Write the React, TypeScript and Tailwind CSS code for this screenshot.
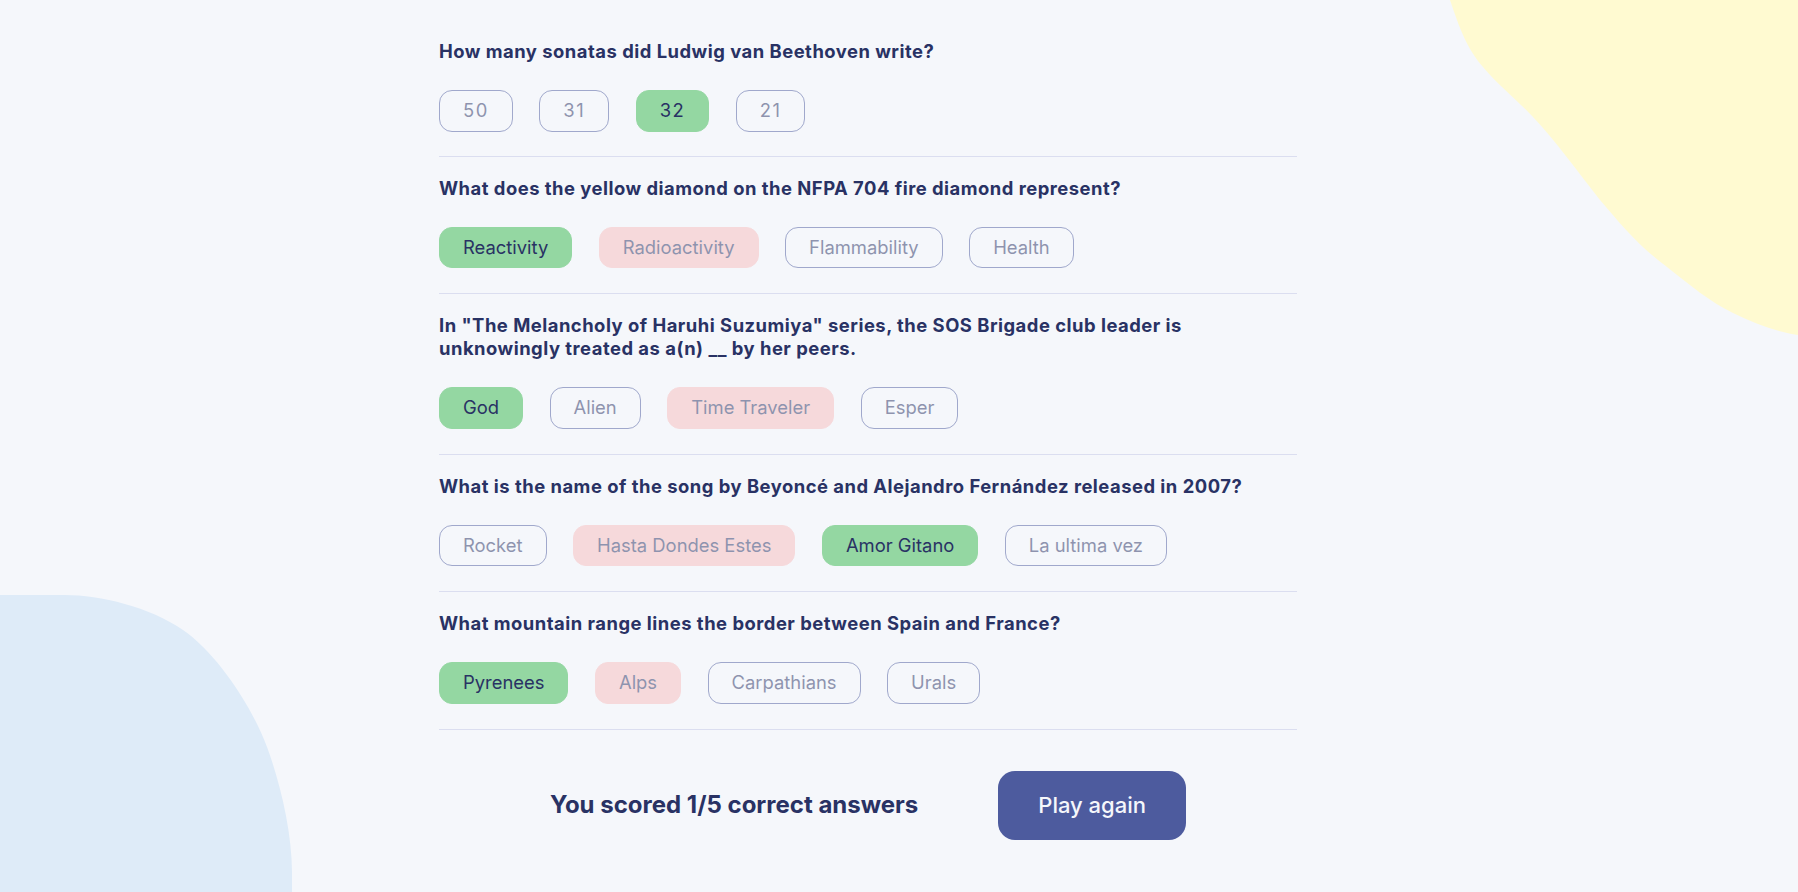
import React from 'react'

type Status = 'correct' | 'wrong' | 'idle'

interface Option {
  text: string
  status: Status
}

interface Question {
  question: string
  options: Option[]
}

const questions: Question[] = [
  {
    question: 'How many sonatas did Ludwig van Beethoven write?',
    options: [
      { text: '50', status: 'idle' },
      { text: '31', status: 'idle' },
      { text: '32', status: 'correct' },
      { text: '21', status: 'idle' },
    ],
  },
  {
    question: 'What does the yellow diamond on the NFPA 704 fire diamond represent?',
    options: [
      { text: 'Reactivity', status: 'correct' },
      { text: 'Radioactivity', status: 'wrong' },
      { text: 'Flammability', status: 'idle' },
      { text: 'Health', status: 'idle' },
    ],
  },
  {
    question:
      'In "The Melancholy of Haruhi Suzumiya" series, the SOS Brigade club leader is unknowingly treated as a(n) __ by her peers.',
    options: [
      { text: 'God', status: 'correct' },
      { text: 'Alien', status: 'idle' },
      { text: 'Time Traveler', status: 'wrong' },
      { text: 'Esper', status: 'idle' },
    ],
  },
  {
    question: 'What is the name of the song by Beyoncé and Alejandro Fernández released in 2007?',
    options: [
      { text: 'Rocket', status: 'idle' },
      { text: 'Hasta Dondes Estes', status: 'wrong' },
      { text: 'Amor Gitano', status: 'correct' },
      { text: 'La ultima vez', status: 'idle' },
    ],
  },
  {
    question: 'What mountain range lines the border between Spain and France?',
    options: [
      { text: 'Pyrenees', status: 'correct' },
      { text: 'Alps', status: 'wrong' },
      { text: 'Carpathians', status: 'idle' },
      { text: 'Urals', status: 'idle' },
    ],
  },
]

function OptionButton({ option }: { option: Option }) {
  const styles = {
    correct: 'border-[#94D7A2] bg-[#94D7A2]',
    wrong: 'border-[#F8BCBC] bg-[#F8BCBC] opacity-50',
    idle: 'border-[#4D5B9E] bg-transparent opacity-50',
  }[option.status]
  // digits render a touch wider in the original font
  const numeric = /^\d+$/.test(option.text) ? 'tracking-[1.5px]' : ''

  return (
    <button
      className={`rounded-[13px] border px-[23px] py-[9px] text-[18.4px] leading-[21.5px] text-[#293264] ${numeric} ${styles}`}
    >
      {option.text}
    </button>
  )
}

function QuestionBlock({ item, first }: { item: Question; first: boolean }) {
  return (
    <div
      className={`border-b border-[#DBDEF0] ${first ? 'pt-[40px] pb-[24px]' : 'pt-[20px] pb-[25px]'}`}
    >
      <h2 className="max-w-[820px] text-[18.4px] font-bold leading-[23px] tracking-[0.5px] text-[#293264]">
        {item.question}
      </h2>
      <div className="mt-[27px] flex gap-[26.5px]">
        {item.options.map((o) => (
          <OptionButton key={o.text} option={o} />
        ))}
      </div>
    </div>
  )
}

export default function App() {
  return (
    <div className="relative min-h-screen overflow-hidden bg-[#F5F7FB] [font-family:Inter,sans-serif]">
      {/* yellow blob top right */}
      <svg
        className="absolute right-0 top-0"
        width="358"
        height="340"
        viewBox="0 0 358 340"
        aria-hidden="true"
      >
        <path
          d="M10 0 C 20 30, 28 50, 43 67 C 60 87, 75 98, 93 117 C 115 140, 138 172, 160 200 C 182 226, 200 247, 227 267 C 250 285, 270 302, 293 313 C 315 324, 338 332, 358 335 L 358 0 Z"
          fill="#FFFAD1"
        />
      </svg>

      {/* blue blob bottom left */}
      <svg
        className="absolute bottom-0 left-0"
        width="300"
        height="300"
        viewBox="0 0 300 300"
        aria-hidden="true"
      >
        <path
          d="M0 3 L 65 3 C 100 3, 150 15, 183 38 C 215 60, 250 110, 267 155 C 280 190, 292 240, 292 280 L 292 300 L 0 300 Z"
          fill="#DEEBF8"
        />
      </svg>

      <div className="relative ml-[439px] w-[858px]">
        {questions.map((q, i) => (
          <QuestionBlock key={i} item={q} first={i === 0} />
        ))}

        <div className="mt-[41px] flex items-center justify-center gap-[80px]">
          <p className="text-[24px] font-bold text-[#293264]">You scored 1/5 correct answers</p>
          <button className="rounded-[17px] bg-[#4D5B9E] px-[40px] py-[20.5px] text-[22px] font-medium leading-[28px] text-[#F5F7FB]">
            Play again
          </button>
        </div>
      </div>
    </div>
  )
}
